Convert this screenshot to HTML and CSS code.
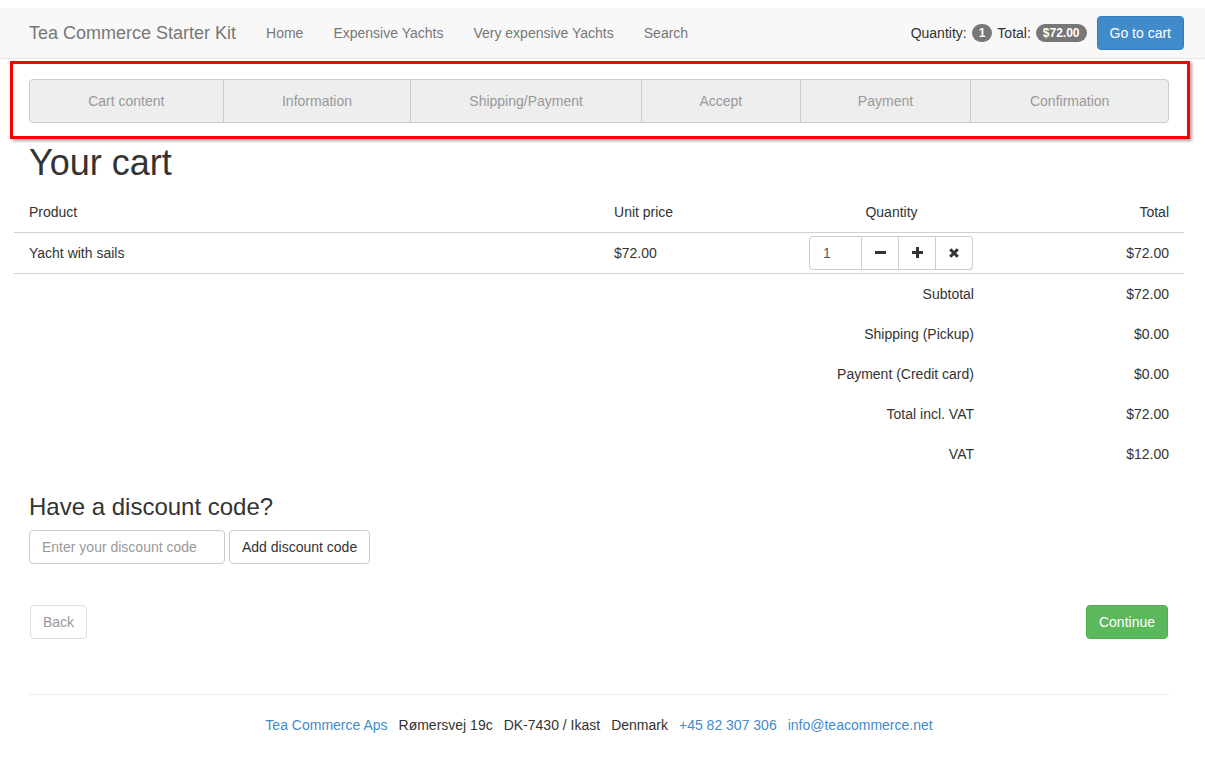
FILE: index.html
```html
<!DOCTYPE html>
<html lang="en">
<head>
<meta charset="utf-8">
<title>Your cart - Tea Commerce Starter Kit</title>
<link rel="stylesheet" href="styles.css">
</head>
<body>
<div class="page">
  <nav class="navbar">
    <div class="container nav-inner">
      <a class="brand" href="#">Tea Commerce Starter Kit</a>
      <ul class="nav-links">
        <li><a href="#">Home</a></li>
        <li><a href="#">Expensive Yachts</a></li>
        <li><a href="#">Very expensive Yachts</a></li>
        <li><a href="#">Search</a></li>
      </ul>
      <div class="mini-cart">
        <span>Quantity:</span>
        <span class="badge">1</span>
        <span>Total:</span>
        <span class="badge">$72.00</span>
        <a class="btn btn-primary" href="#">Go to cart</a>
      </div>
    </div>
  </nav>

  <main class="container main">
    <div class="steps-wrap">
      <div class="steps">
        <div class="step">Cart content</div>
        <div class="step">Information</div>
        <div class="step">Shipping/Payment</div>
        <div class="step">Accept</div>
        <div class="step">Payment</div>
        <div class="step">Confirmation</div>
      </div>
    </div>

    <h1 class="title">Your cart</h1>

    <table class="cart">
      <colgroup>
        <col class="c-product"><col class="c-unit"><col class="c-qty"><col class="c-total">
      </colgroup>
      <thead>
        <tr>
          <th>Product</th>
          <th>Unit price</th>
          <th class="center">Quantity</th>
          <th class="right">Total</th>
        </tr>
      </thead>
      <tbody>
        <tr class="item">
          <td>Yacht with sails</td>
          <td>$72.00</td>
          <td>
            <div class="qty-group">
              <input class="qty-input" type="text" value="1">
              <button class="qty-btn" type="button" aria-label="Decrease">
                <svg width="11" height="11" viewBox="0 0 11 11"><rect x="0" y="4" width="11" height="3" fill="#333"/></svg>
              </button>
              <button class="qty-btn" type="button" aria-label="Increase">
                <svg width="11" height="11" viewBox="0 0 11 11"><rect x="0" y="4" width="11" height="3" fill="#333"/><rect x="4" y="0" width="3" height="11" fill="#333"/></svg>
              </button>
              <button class="qty-btn" type="button" aria-label="Remove">
                <svg width="10" height="10" viewBox="0 0 10 10"><path d="M1.2 1.2 L8.8 8.8 M8.8 1.2 L1.2 8.8" stroke="#333" stroke-width="3" stroke-linecap="butt"/></svg>
              </button>
            </div>
          </td>
          <td class="right">$72.00</td>
        </tr>
      </tbody>
      <tbody class="summary">
        <tr><td colspan="3" class="right">Subtotal</td><td class="right">$72.00</td></tr>
        <tr><td colspan="3" class="right">Shipping (Pickup)</td><td class="right">$0.00</td></tr>
        <tr><td colspan="3" class="right">Payment (Credit card)</td><td class="right">$0.00</td></tr>
        <tr><td colspan="3" class="right">Total incl. VAT</td><td class="right">$72.00</td></tr>
        <tr><td colspan="3" class="right">VAT</td><td class="right">$12.00</td></tr>
      </tbody>
    </table>

    <h3 class="discount-title">Have a discount code?</h3>
    <div class="discount">
      <input class="form-control" type="text" placeholder="Enter your discount code">
      <button class="btn btn-default" type="button">Add discount code</button>
    </div>

    <div class="actions">
      <a class="btn btn-default btn-back" href="#">Back</a>
      <a class="btn btn-success" href="#">Continue</a>
    </div>

    <footer class="footer">
      <a href="#">Tea Commerce Aps</a>
      <span>Rømersvej 19c</span>
      <span>DK-7430 / Ikast</span>
      <span>Denmark</span>
      <a href="#">+45 82 307 306</a>
      <a href="#">info@teacommerce.net</a>
    </footer>
  </main>
</div>
</body>
</html>
```

FILE: styles.css
```css
* { box-sizing: border-box; }

html, body {
  margin: 0;
  padding: 0;
  background: #fff;
}

body {
  font-family: "Liberation Sans", Arial, Helvetica, sans-serif;
  font-size: 14px;
  line-height: 20px;
  color: #333;
}

a { text-decoration: none; color: #428bca; }

.page { padding-top: 8px; }

.container {
  width: 1170px;
  margin-left: 14px;
  padding: 0 15px;
}

/* Navbar */
.navbar {
  background: #f8f8f8;
  border-bottom: 1px solid #e7e7e7;
  height: 51px;
}

.nav-inner {
  display: flex;
  align-items: center;
  height: 50px;
  padding: 0;
}

.brand {
  font-size: 18px;
  line-height: 20px;
  color: #777;
  padding: 15px;
}

.nav-links {
  display: flex;
  list-style: none;
  margin: 0;
  padding: 0;
}

.nav-links a {
  display: block;
  padding: 15px;
  color: #777;
}

.mini-cart {
  margin-left: auto;
  display: flex;
  align-items: center;
  gap: 5px;
  color: #333;
}

.badge {
  display: inline-block;
  min-width: 10px;
  padding: 3px 7px;
  font-size: 12px;
  font-weight: bold;
  line-height: 12px;
  color: #fff;
  background: #777;
  border-radius: 10px;
  text-align: center;
}

.mini-cart .btn { margin-left: 5px; }

/* Buttons */
.btn {
  display: inline-block;
  padding: 6px 12px;
  font-size: 14px;
  line-height: 20px;
  border: 1px solid transparent;
  border-radius: 4px;
  font-family: inherit;
  cursor: pointer;
  white-space: nowrap;
}

.btn-primary {
  color: #fff;
  background: #428bca;
  border-color: #357ebd;
}

.btn-default {
  color: #333;
  background: #fff;
  border-color: #ccc;
}

.btn-success {
  color: #fff;
  background: #5cb85c;
  border-color: #4cae4c;
}

/* Main */
.steps-wrap {
  position: relative;
  margin-top: 20px;
}

/* annotation highlight drawn over the steps bar */
.steps-wrap::after {
  content: "";
  position: absolute;
  left: -19px;
  right: -21px;
  top: -18px;
  bottom: -16px;
  border: 3px solid #ff0000;
  box-shadow: 2px 2px 3px rgba(0, 0, 0, 0.35);
  pointer-events: none;
}

.steps {
  display: grid;
  grid-template-columns: 193fr 188fr 231fr 159fr 171fr 198fr;
  background: #eee;
  border: 1px solid #ccc;
  border-radius: 4px;
  height: 44px;
}

.step {
  display: flex;
  align-items: center;
  justify-content: center;
  color: #999;
  border-left: 1px solid #ccc;
}

.step:first-child { border-left: 0; }

.title {
  font-size: 36px;
  font-weight: 500;
  line-height: 39.6px;
  margin: 20px 0 10px;
  color: #333;
}

/* Cart table */
.cart {
  width: 1170px;
  margin: 0 -15px;
  border-collapse: collapse;
  table-layout: fixed;
}

.c-product { width: 50%; }
.c-unit { width: 16.666%; }
.c-qty { width: 16.666%; }
.c-total { width: 16.666%; }

.cart th {
  font-weight: normal;
  text-align: left;
  padding: 9px 15px 10px;
  border-bottom: 1px solid #d0d0d0;
}

.cart td {
  padding: 10px 15px;
}

.cart .item td {
  padding-top: 3px;
  padding-bottom: 3px;
  height: 41px;
  border-bottom: 1px solid #d0d0d0;
}

.center { text-align: center; }
.cart th.center { text-align: center; }
.cart th.right, .right { text-align: right; }

.qty-group {
  display: flex;
  height: 34px;
}

.qty-input {
  width: 53px;
  height: 34px;
  border: 1px solid #ccc;
  border-radius: 4px 0 0 4px;
  padding: 6px 13px;
  font-family: inherit;
  font-size: 14px;
  color: #555;
  outline: none;
}

.qty-btn {
  width: 37px;
  height: 34px;
  background: #fff;
  border: 1px solid #ccc;
  border-left: 0;
  padding: 0;
  display: flex;
  align-items: center;
  justify-content: center;
  cursor: pointer;
}

.qty-btn:last-child { border-radius: 0 4px 4px 0; }

/* Discount */
.discount-title {
  font-size: 24px;
  font-weight: 500;
  line-height: 26.4px;
  margin: 20px 0 10px;
}

.discount {
  display: flex;
  gap: 4px;
}

.form-control {
  width: 196px;
  height: 34px;
  padding: 6px 12px;
  font-family: inherit;
  font-size: 14px;
  color: #555;
  border: 1px solid #ccc;
  border-radius: 4px;
  outline: none;
}

.form-control::placeholder { color: #999; }

.actions {
  display: flex;
  justify-content: space-between;
  margin-top: 41px;
  padding-left: 1px;
  padding-right: 1px;
}

.btn-back {
  color: #999;
  border-color: #ddd;
}

/* Footer */
.footer {
  margin-top: 55px;
  border-top: 1px solid #eee;
  padding: 20px 0;
  display: flex;
  justify-content: center;
  gap: 11px;
  color: #333;
}
```
